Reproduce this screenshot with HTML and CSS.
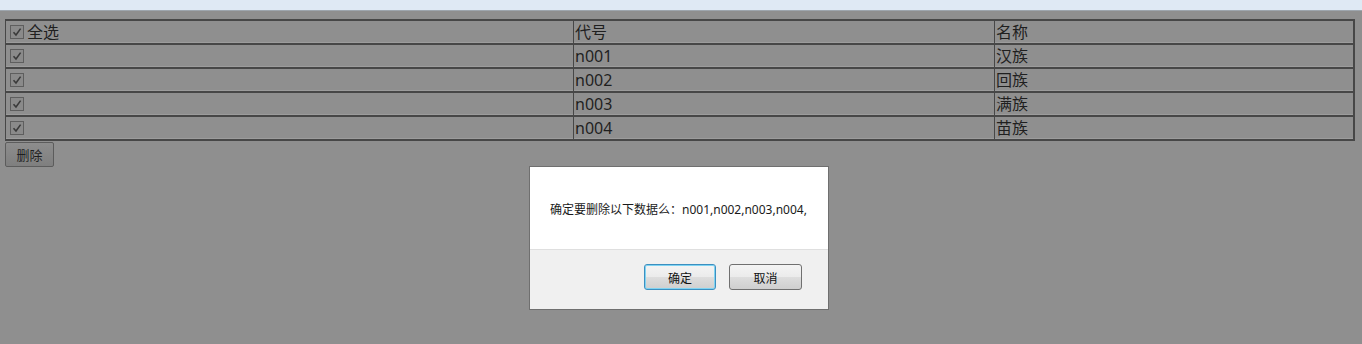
FILE: index.html
```html
<!DOCTYPE html>
<html lang="zh">
<head>
<meta charset="utf-8">
<title>删除</title>
<link rel="stylesheet" href="styles.css">
</head>
<body>
<div class="topbar"></div>
<div class="page">
  <table class="grid">
    <colgroup>
      <col class="c1"><col class="c2"><col class="c3">
    </colgroup>
    <tr>
      <td><span class="cb"><svg viewBox="0 0 12 12" width="12" height="12"><path d="M2.5 6.2 L5 9 L9.6 2.6" fill="none" stroke="#3a3a3a" stroke-width="1.6"/></svg></span>全选</td>
      <td>代号</td>
      <td>名称</td>
    </tr>
    <tr>
      <td><span class="cb"><svg viewBox="0 0 12 12" width="12" height="12"><path d="M2.5 6.2 L5 9 L9.6 2.6" fill="none" stroke="#3a3a3a" stroke-width="1.6"/></svg></span></td>
      <td>n001</td>
      <td>汉族</td>
    </tr>
    <tr>
      <td><span class="cb"><svg viewBox="0 0 12 12" width="12" height="12"><path d="M2.5 6.2 L5 9 L9.6 2.6" fill="none" stroke="#3a3a3a" stroke-width="1.6"/></svg></span></td>
      <td>n002</td>
      <td>回族</td>
    </tr>
    <tr>
      <td><span class="cb"><svg viewBox="0 0 12 12" width="12" height="12"><path d="M2.5 6.2 L5 9 L9.6 2.6" fill="none" stroke="#3a3a3a" stroke-width="1.6"/></svg></span></td>
      <td>n003</td>
      <td>满族</td>
    </tr>
    <tr>
      <td><span class="cb"><svg viewBox="0 0 12 12" width="12" height="12"><path d="M2.5 6.2 L5 9 L9.6 2.6" fill="none" stroke="#3a3a3a" stroke-width="1.6"/></svg></span></td>
      <td>n004</td>
      <td>苗族</td>
    </tr>
  </table>
  <button class="del">删除</button>
</div>

<div class="dialog">
  <div class="msg">确定要删除以下数据么：n001,n002,n003,n004,</div>
  <div class="foot">
    <button class="dbtn ok">确定</button>
    <button class="dbtn">取消</button>
  </div>
</div>
</body>
</html>
```

FILE: styles.css
```css
html, body {
  margin: 0;
  padding: 0;
  height: 100%;
}
body {
  background: #8f8f8f;
  font-family: "Noto Sans", "Noto Sans CJK SC", sans-serif;
  color: #1f1f1f;
  overflow: hidden;
}
.topbar {
  height: 10px;
  background: #dfe9f4;
  border-bottom: 1px solid #9ea6ae;
}
.page {
  padding: 8px 0 0 5px;
}
.grid {
  border-collapse: separate;
  border-spacing: 0;
  width: 1350px;
  table-layout: fixed;
  border-right: 2px solid #474747;
  border-bottom: 2px solid #474747;
}
.grid .c1 { width: 568px; }
.grid .c2 { width: 421px; }
.grid .c3 { width: 359px; }
.grid td {
  height: 22px;
  padding: 0 0 0 1px;
  border-top: 2px solid #474747;
  border-left: 1px solid #474747;
  font-size: 16px;
  line-height: 22px;
  white-space: nowrap;
  vertical-align: middle;
  box-shadow: inset 0 -1px 0 #9c9c9c;
}
.grid td:first-child {
  padding-left: 4px;
}
.cb {
  display: inline-block;
  width: 12px;
  height: 12px;
  border: 1px solid #5e5e5e;
  background: #8a8a8a;
  vertical-align: -1px;
  margin-right: 3px;
  position: relative;
}
.cb svg {
  position: absolute;
  left: 0;
  top: 0;
}
.del {
  display: block;
  margin-top: 1px;
  width: 49px;
  height: 25px;
  padding: 0;
  border: 1px solid #5c5c5c;
  border-radius: 2px;
  background: linear-gradient(#8d8d8d, #7f7f7f);
  font-family: "Noto Sans CJK SC", sans-serif;
  font-size: 13px;
  color: #1f1f1f;
}
.dialog {
  position: absolute;
  left: 529px;
  top: 166px;
  width: 298px;
  height: 142px;
  background: #fff;
  border: 1px solid #6f6f6f;
  display: flex;
  flex-direction: column;
}
.msg {
  height: 82px;
  display: flex;
  align-items: center;
  padding-left: 20px;
  font-size: 12px;
  color: #1a1a1a;
  font-family: "Noto Sans", "Noto Sans CJK SC", sans-serif;
  padding-top: 1px;
  box-sizing: border-box;
}
.foot {
  flex: 1;
  background: #f0f0f0;
  border-top: 1px solid #dfdfdf;
  display: flex;
  justify-content: flex-end;
  align-items: flex-start;
  gap: 13px;
  padding: 14px 26px 0 0;
}
.dbtn {
  width: 73px;
  height: 26px;
  padding: 0;
  border: 1px solid #707070;
  border-radius: 3px;
  background: linear-gradient(#f4f4f4 0%, #ebebeb 50%, #dddddd 51%, #cfcfcf 100%);
  font-family: "Noto Sans CJK SC", sans-serif;
  font-size: 12px;
  color: #111;
}
.dbtn.ok {
  width: 72px;
  border-color: #3c8fc0;
  box-shadow: inset 0 0 0 1px #7fd3f2;
}
```
